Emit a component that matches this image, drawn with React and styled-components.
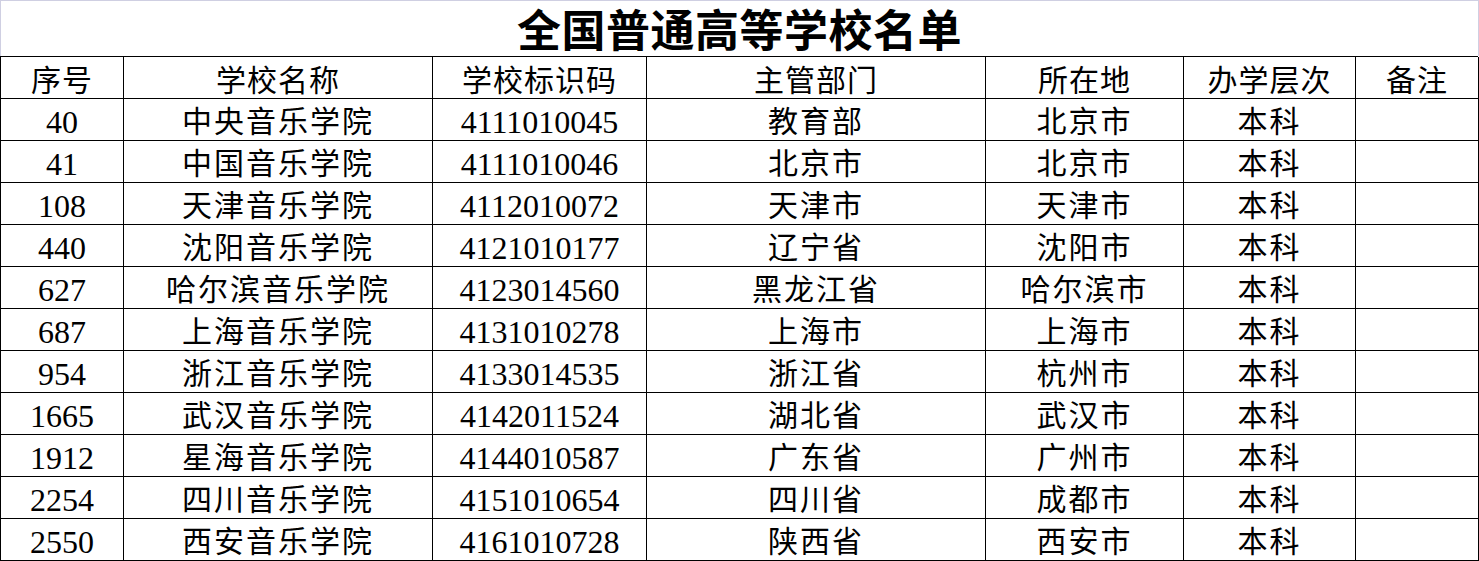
import styled, { createGlobalStyle } from 'styled-components';

const GlobalStyle = createGlobalStyle`
	html, body {
		margin: 0;
		padding: 0;
		background: #fff;
	}
`;

const columns = [123, 309, 214, 339, 198, 172, 123];

const headers = ['序号', '学校名称', '学校标识码', '主管部门', '所在地', '办学层次', '备注'];

const rows = [
	['40', '中央音乐学院', '4111010045', '教育部', '北京市', '本科', ''],
	['41', '中国音乐学院', '4111010046', '北京市', '北京市', '本科', ''],
	['108', '天津音乐学院', '4112010072', '天津市', '天津市', '本科', ''],
	['440', '沈阳音乐学院', '4121010177', '辽宁省', '沈阳市', '本科', ''],
	['627', '哈尔滨音乐学院', '4123014560', '黑龙江省', '哈尔滨市', '本科', ''],
	['687', '上海音乐学院', '4131010278', '上海市', '上海市', '本科', ''],
	['954', '浙江音乐学院', '4133014535', '浙江省', '杭州市', '本科', ''],
	['1665', '武汉音乐学院', '4142011524', '湖北省', '武汉市', '本科', ''],
	['1912', '星海音乐学院', '4144010587', '广东省', '广州市', '本科', ''],
	['2254', '四川音乐学院', '4151010654', '四川省', '成都市', '本科', ''],
	['2550', '西安音乐学院', '4161010728', '陕西省', '西安市', '本科', ''],
];

// columns holding only digits (序号, 学校标识码)
const numericCols = [0, 2];

export default function App() {
	return (
		<>
			<GlobalStyle />
			<Sheet>
				<Title>全国普通高等学校名单</Title>
				<Grid>
					{headers.map((h) => (
						<HeadCell key={h}>{h}</HeadCell>
					))}
					{rows.map((row, r) =>
						row.map((value, c) => (
							<Cell key={r + '-' + c} $numeric={numericCols.includes(c)}>
								{value}
							</Cell>
						))
					)}
				</Grid>
			</Sheet>
		</>
	);
}

const Sheet = styled.div`
	width: 1479px;
	height: 561px;
	overflow: hidden;
	background: #fff;
`;

const Title = styled.div`
	height: 55px;
	border: 1px solid #cfcfe2;
	border-bottom: none;
	display: flex;
	align-items: center;
	justify-content: center;
	font-family: 'Noto Sans CJK SC', sans-serif;
	font-weight: 700;
	font-size: 44px;
	color: #000;
	letter-spacing: 0.5px;
	line-height: 1.2;
`;

const Grid = styled.div`
	display: grid;
	grid-template-columns: ${columns.map((w) => w + 'px').join(' ')};
	grid-auto-rows: 42px;
	border-top: 1px solid #000;
	border-left: 1px solid #000;
	width: 1478px;
	box-sizing: border-box;
`;

const CellBase = styled.div`
	display: flex;
	align-items: center;
	justify-content: center;
	border-right: 1px solid #000;
	border-bottom: 1px solid #000;
	color: #000;
	white-space: nowrap;
	line-height: 1;
	overflow: hidden;
`;

const HeadCell = styled(CellBase)`
	font-family: 'Noto Sans CJK SC', sans-serif;
	font-size: 30px;
	letter-spacing: 1px;
	padding-top: 1px;
`;

const Cell = styled(CellBase)`
	font-family: 'Liberation Serif', 'Noto Sans CJK SC', serif;
	font-size: ${(props) => (props.$numeric ? '32px' : '30px')};
	font-weight: 400;
	letter-spacing: ${(props) => (props.$numeric ? '0' : '2px')};
	padding-top: 4px;
`;
